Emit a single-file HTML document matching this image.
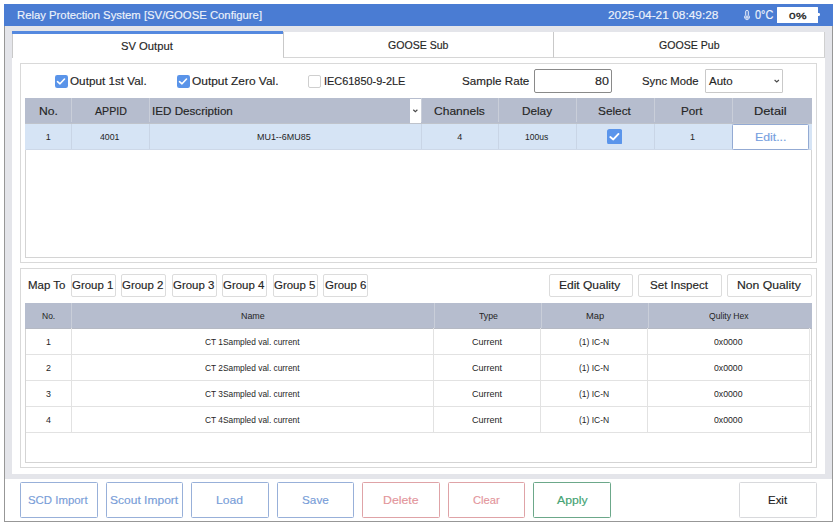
<!DOCTYPE html>
<html><head><meta charset="utf-8">
<style>
*{margin:0;padding:0;box-sizing:border-box}
html,body{width:839px;height:527px;overflow:hidden;background:#fff;font-family:"Liberation Sans",sans-serif}
.a{position:absolute}
.t{position:absolute;white-space:nowrap;transform-origin:0 0}
</style></head><body>
<div class="a" style="left:4px;top:4px;width:829px;height:518px;border:1px solid #979797;border-top:none;background:#fff"></div>
<div class="a" style="left:5px;top:26px;width:827px;height:453px;background:#e4e5ea"></div>
<div class="a" style="left:4px;top:4px;width:829px;height:22px;background:#4a7cd3"></div>
<svg class="a" style="left:743px;top:9px" width="8" height="12" viewBox="0 0 8 12"><path d="M2.45 6.19 V2.9 A1.55 1.55 0 0 1 5.55 2.9 V6.19 A2.5 2.5 0 1 1 2.45 6.19 Z" fill="#6f95d9" stroke="#dfe8f8" stroke-width="0.9"/><circle cx="4" cy="8.15" r="1.7" fill="#c3d3f1"/></svg>
<div class="a" style="left:777px;top:7px;width:41px;height:16px;background:#fff;border-radius:0.5px"></div>
<div class="a" style="left:818px;top:12.8px;width:2px;height:3.6px;background:#fff;border-radius:0 1.2px 1.2px 0"></div>
<div class="a" style="left:12px;top:31px;width:271px;height:27px;background:#fff;border-left:1px solid #c9c9c9"></div>
<div class="a" style="left:12px;top:31px;width:271px;height:3px;background:#5589df"></div>
<div class="a" style="left:283px;top:32px;width:271px;height:26px;background:#fff;border-left:1px solid #c9c9c9;border-bottom:1px solid #d6d6d6"></div>
<div class="a" style="left:553px;top:32px;width:272px;height:26px;background:#fff;border-left:1px solid #c9c9c9;border-right:1px solid #d0d0d0;border-bottom:1px solid #d6d6d6"></div>
<div class="a" style="left:12px;top:58px;width:813px;height:416px;background:#fff"></div>
<div class="a" style="left:20px;top:63px;width:797px;height:200px;border:1px solid #d9d9d9"></div>
<svg class="a" style="left:54.6px;top:74.6px" width="13" height="13" viewBox="0 0 13 13"><rect x="0" y="0" width="13" height="13" rx="2.2" fill="#5a94e9"/><path d="M2.5 6.7 L5.0 8.8 L9.5 4.0" fill="none" stroke="#fff" stroke-width="1.6" stroke-linecap="round" stroke-linejoin="round"/></svg>
<svg class="a" style="left:177.1px;top:74.6px" width="13" height="13" viewBox="0 0 13 13"><rect x="0" y="0" width="13" height="13" rx="2.2" fill="#5a94e9"/><path d="M2.5 6.7 L5.0 8.8 L9.5 4.0" fill="none" stroke="#fff" stroke-width="1.6" stroke-linecap="round" stroke-linejoin="round"/></svg>
<div class="a" style="left:308.3px;top:74.7px;width:13px;height:13px;border:1px solid #cfcfcf;border-radius:2px;background:#fff"></div>
<div class="a" style="left:534px;top:69px;width:78px;height:24px;border:1px solid #8a8a8a;border-radius:2px"></div>
<div class="a" style="left:705px;top:69px;width:78px;height:24px;border:1px solid #c9c9c9;border-radius:1px"></div>
<svg class="a" style="left:773px;top:78px" width="8" height="6" viewBox="0 0 8 6"><path d="M1.6 2.0 L3.75 4.0 L5.9 2.0" fill="none" stroke="#4a4a4a" stroke-width="1.15"/></svg>
<div class="a" style="left:25px;top:98px;width:787px;height:160px;border:1px solid #d4d4d4"></div>
<div class="a" style="left:25px;top:98px;width:787px;height:25px;background:#b6bdce"></div>
<div class="a" style="left:25px;top:123px;width:787px;height:1px;background:#bfc3cb"></div>
<div class="a" style="left:25px;top:124px;width:787px;height:26px;background:#d6e4f5"></div>
<div class="a" style="left:26px;top:149px;width:785px;height:1px;background:#cdd8e8"></div>
<div class="a" style="left:71px;top:98px;width:1px;height:24px;background:#c9ced9"></div>
<div class="a" style="left:71px;top:124px;width:1px;height:25px;background:#c9d5e6"></div>
<div class="a" style="left:149px;top:98px;width:1px;height:24px;background:#c9ced9"></div>
<div class="a" style="left:149px;top:124px;width:1px;height:25px;background:#c9d5e6"></div>
<div class="a" style="left:421px;top:98px;width:1px;height:24px;background:#c9ced9"></div>
<div class="a" style="left:421px;top:124px;width:1px;height:25px;background:#c9d5e6"></div>
<div class="a" style="left:498px;top:98px;width:1px;height:24px;background:#c9ced9"></div>
<div class="a" style="left:498px;top:124px;width:1px;height:25px;background:#c9d5e6"></div>
<div class="a" style="left:576px;top:98px;width:1px;height:24px;background:#c9ced9"></div>
<div class="a" style="left:576px;top:124px;width:1px;height:25px;background:#c9d5e6"></div>
<div class="a" style="left:654px;top:98px;width:1px;height:24px;background:#c9ced9"></div>
<div class="a" style="left:654px;top:124px;width:1px;height:25px;background:#c9d5e6"></div>
<div class="a" style="left:732px;top:98px;width:1px;height:24px;background:#c9ced9"></div>
<div class="a" style="left:732px;top:124px;width:1px;height:25px;background:#c9d5e6"></div>
<div class="a" style="left:410px;top:99px;width:11px;height:24px;background:#fff"></div>
<svg class="a" style="left:411px;top:107px" width="8" height="6" viewBox="0 0 8 6"><path d="M2.3 2.8 L4.35 4.7 L6.4 2.8" fill="none" stroke="#4a4a4a" stroke-width="1.2"/></svg>
<svg class="a" style="left:607px;top:128.8px" width="15.4" height="15.5" viewBox="0 0 15.4 15.5"><rect x="0" y="0" width="15.4" height="15.5" rx="2.6" fill="#5b95eb"/><path d="M3.3 8.0 L6.3 10.4 L11.5 4.9" fill="none" stroke="#fff" stroke-width="1.9" stroke-linecap="round" stroke-linejoin="round"/></svg>
<div class="a" style="left:732px;top:124px;width:77px;height:26px;background:#fff;border:1px solid #93aad3;border-radius:1.5px"></div>
<div class="a" style="left:20px;top:268px;width:797px;height:200px;border:1px solid #d9d9d9"></div>
<div class="a" style="left:71px;top:274px;width:45px;height:23px;border:1px solid #dcdcdc;border-radius:2px"></div>
<div class="a" style="left:121px;top:274px;width:45px;height:23px;border:1px solid #dcdcdc;border-radius:2px"></div>
<div class="a" style="left:172px;top:274px;width:45px;height:23px;border:1px solid #dcdcdc;border-radius:2px"></div>
<div class="a" style="left:222px;top:274px;width:45px;height:23px;border:1px solid #dcdcdc;border-radius:2px"></div>
<div class="a" style="left:273px;top:274px;width:45px;height:23px;border:1px solid #dcdcdc;border-radius:2px"></div>
<div class="a" style="left:323px;top:274px;width:45px;height:23px;border:1px solid #dcdcdc;border-radius:2px"></div>
<div class="a" style="left:549px;top:274px;width:84px;height:23px;border:1px solid #dcdcdc;border-radius:2px"></div>
<div class="a" style="left:638px;top:274px;width:84px;height:23px;border:1px solid #dcdcdc;border-radius:2px"></div>
<div class="a" style="left:727px;top:274px;width:85px;height:23px;border:1px solid #dcdcdc;border-radius:2px"></div>
<div class="a" style="left:25px;top:303px;width:787px;height:160px;border:1px solid #d4d4d4"></div>
<div class="a" style="left:25px;top:303px;width:787px;height:26px;background:#b6bdce"></div>
<div class="a" style="left:25px;top:328px;width:787px;height:1px;background:#b5b9c3"></div>
<div class="a" style="left:71px;top:303px;width:1px;height:25px;background:#c9ced9"></div>
<div class="a" style="left:71px;top:328px;width:1px;height:104px;background:#e2e2e2"></div>
<div class="a" style="left:434px;top:303px;width:1px;height:25px;background:#c9ced9"></div>
<div class="a" style="left:433px;top:328px;width:1px;height:104px;background:#e2e2e2"></div>
<div class="a" style="left:541px;top:303px;width:1px;height:25px;background:#c9ced9"></div>
<div class="a" style="left:540px;top:328px;width:1px;height:104px;background:#e2e2e2"></div>
<div class="a" style="left:648px;top:303px;width:1px;height:25px;background:#c9ced9"></div>
<div class="a" style="left:647px;top:328px;width:1px;height:104px;background:#e2e2e2"></div>
<div class="a" style="left:809px;top:328px;width:1px;height:104px;background:#e6e6e6"></div>
<div class="a" style="left:26px;top:354px;width:785px;height:1px;background:#e2e2e2"></div>
<div class="a" style="left:26px;top:380px;width:785px;height:1px;background:#e2e2e2"></div>
<div class="a" style="left:26px;top:406px;width:785px;height:1px;background:#e2e2e2"></div>
<div class="a" style="left:26px;top:432px;width:785px;height:1px;background:#e2e2e2"></div>
<div class="a" style="left:20px;top:482px;width:77.5px;height:36px;border:1px solid #98b0d9;border-radius:1.5px"></div>
<div class="a" style="left:105.5px;top:482px;width:77.5px;height:36px;border:1px solid #98b0d9;border-radius:1.5px"></div>
<div class="a" style="left:191px;top:482px;width:77.5px;height:36px;border:1px solid #98b0d9;border-radius:1.5px"></div>
<div class="a" style="left:276.5px;top:482px;width:77.5px;height:36px;border:1px solid #98b0d9;border-radius:1.5px"></div>
<div class="a" style="left:362.3px;top:482px;width:77.5px;height:36px;border:1px solid #dfa3a7;border-radius:1.5px"></div>
<div class="a" style="left:447.8px;top:482px;width:77.5px;height:36px;border:1px solid #dfa3a7;border-radius:1.5px"></div>
<div class="a" style="left:533.3px;top:482px;width:77.5px;height:36px;border:1px solid #6ca88a;border-radius:1.5px"></div>
<div class="a" style="left:739.3px;top:482px;width:77.4px;height:36px;border:1px solid #d8d9dc;border-radius:1.5px"></div>
<span class="t" style="left:17.23px;top:9.00px;font-size:11.701px;line-height:11.701px;color:#eef3fb;transform:scaleX(0.9673);-webkit-text-stroke:0.15px #eef3fb;">Relay Protection System [SV/GOOSE Configure]</span>
<span class="t" style="left:607.76px;top:10.00px;font-size:11.483px;line-height:11.483px;color:#eef3fb;transform:scaleX(1.0371);-webkit-text-stroke:0.15px #eef3fb;">2025-04-21 08:49:28</span>
<span class="t" style="left:755.18px;top:10.00px;font-size:11.919px;line-height:11.919px;color:#eef3fb;transform:scaleX(0.9167);-webkit-text-stroke:0.15px #eef3fb;">0°C</span>
<span class="t" style="left:788.55px;top:11.00px;font-size:9.884px;line-height:9.884px;color:#222;transform:scaleX(1.2000);-webkit-text-stroke:0.35px #222;">0</span>
<span class="t" style="left:796.20px;top:11.00px;font-size:9.884px;line-height:9.884px;color:#222;transform:scaleX(1.2000);-webkit-text-stroke:0.35px #222;">%</span>
<span class="t" style="left:121.02px;top:41.00px;font-size:11.483px;line-height:11.483px;color:#252525;transform:scaleX(0.9788);-webkit-text-stroke:0.15px #252525;">SV Output</span>
<span class="t" style="left:388.08px;top:40.00px;font-size:11.483px;line-height:11.483px;color:#252525;transform:scaleX(0.9203);-webkit-text-stroke:0.15px #252525;">GOOSE Sub</span>
<span class="t" style="left:658.78px;top:40.00px;font-size:11.483px;line-height:11.483px;color:#252525;transform:scaleX(0.9219);-webkit-text-stroke:0.15px #252525;">GOOSE Pub</span>
<span class="t" style="left:69.65px;top:76.00px;font-size:11.192px;line-height:11.192px;color:#252525;transform:scaleX(1.0479);-webkit-text-stroke:0.15px #252525;">Output 1st Val.</span>
<span class="t" style="left:191.84px;top:76.00px;font-size:11.192px;line-height:11.192px;color:#252525;transform:scaleX(1.0646);-webkit-text-stroke:0.15px #252525;">Output Zero Val.</span>
<span class="t" style="left:324.02px;top:76.00px;font-size:11.192px;line-height:11.192px;color:#252525;transform:scaleX(0.9756);-webkit-text-stroke:0.15px #252525;">IEC61850-9-2LE</span>
<span class="t" style="left:461.56px;top:76.00px;font-size:11.192px;line-height:11.192px;color:#252525;transform:scaleX(1.0413);-webkit-text-stroke:0.15px #252525;">Sample Rate</span>
<span class="t" style="left:594.71px;top:76.00px;font-size:11.483px;line-height:11.483px;color:#252525;transform:scaleX(1.0909);-webkit-text-stroke:0.15px #252525;">80</span>
<span class="t" style="left:642.09px;top:76.00px;font-size:11.192px;line-height:11.192px;color:#252525;transform:scaleX(1.0109);-webkit-text-stroke:0.15px #252525;">Sync Mode</span>
<span class="t" style="left:709.10px;top:76.00px;font-size:11.483px;line-height:11.483px;color:#252525;transform:scaleX(1.0043);-webkit-text-stroke:0.15px #252525;">Auto</span>
<span class="t" style="left:38.92px;top:106.00px;font-size:11.337px;line-height:11.337px;color:#252525;transform:scaleX(1.0750);-webkit-text-stroke:0.15px #252525;">No.</span>
<span class="t" style="left:94.50px;top:106.00px;font-size:11.337px;line-height:11.337px;color:#252525;transform:scaleX(0.9364);-webkit-text-stroke:0.15px #252525;">APPID</span>
<span class="t" style="left:151.97px;top:106.00px;font-size:11.337px;line-height:11.337px;color:#252525;transform:scaleX(1.0273);-webkit-text-stroke:0.15px #252525;">IED Description</span>
<span class="t" style="left:434.44px;top:106.00px;font-size:11.337px;line-height:11.337px;color:#252525;transform:scaleX(1.0630);-webkit-text-stroke:0.15px #252525;">Channels</span>
<span class="t" style="left:522.16px;top:106.00px;font-size:11.337px;line-height:11.337px;color:#252525;transform:scaleX(1.0357);-webkit-text-stroke:0.15px #252525;">Delay</span>
<span class="t" style="left:598.26px;top:106.00px;font-size:11.337px;line-height:11.337px;color:#252525;transform:scaleX(1.0433);-webkit-text-stroke:0.15px #252525;">Select</span>
<span class="t" style="left:681.16px;top:106.00px;font-size:11.337px;line-height:11.337px;color:#252525;transform:scaleX(1.0350);-webkit-text-stroke:0.15px #252525;">Port</span>
<span class="t" style="left:754.47px;top:106.00px;font-size:11.337px;line-height:11.337px;color:#252525;transform:scaleX(1.1296);-webkit-text-stroke:0.15px #252525;">Detail</span>
<span class="t" style="left:45.75px;top:133.00px;font-size:9.012px;line-height:9.012px;color:#252525;">1</span>
<span class="t" style="left:99.53px;top:133.00px;font-size:9.012px;line-height:9.012px;color:#252525;transform:scaleX(0.9722);">4001</span>
<span class="t" style="left:256.71px;top:133.00px;font-size:9.012px;line-height:9.012px;color:#252525;transform:scaleX(0.9925);">MU1--6MU85</span>
<span class="t" style="left:457.15px;top:133.00px;font-size:9.012px;line-height:9.012px;color:#252525;">4</span>
<span class="t" style="left:525.25px;top:133.00px;font-size:9.012px;line-height:9.012px;color:#252525;transform:scaleX(0.9478);">100us</span>
<span class="t" style="left:690.10px;top:133.00px;font-size:9.012px;line-height:9.012px;color:#252525;">1</span>
<span class="t" style="left:754.73px;top:132.00px;font-size:11.483px;line-height:11.483px;color:#76a0e0;transform:scaleX(1.0704);-webkit-text-stroke:0.15px #76a0e0;">Edit...</span>
<span class="t" style="left:27.53px;top:280.00px;font-size:10.756px;line-height:10.756px;color:#252525;transform:scaleX(1.0676);-webkit-text-stroke:0.15px #252525;">Map To</span>
<span class="t" style="left:72.34px;top:280.00px;font-size:10.756px;line-height:10.756px;color:#252525;transform:scaleX(1.0649);-webkit-text-stroke:0.15px #252525;">Group 1</span>
<span class="t" style="left:122.34px;top:280.00px;font-size:10.756px;line-height:10.756px;color:#252525;transform:scaleX(1.0649);-webkit-text-stroke:0.15px #252525;">Group 2</span>
<span class="t" style="left:172.94px;top:280.00px;font-size:10.756px;line-height:10.756px;color:#252525;transform:scaleX(1.0649);-webkit-text-stroke:0.15px #252525;">Group 3</span>
<span class="t" style="left:223.44px;top:280.00px;font-size:10.756px;line-height:10.756px;color:#252525;transform:scaleX(1.0649);-webkit-text-stroke:0.15px #252525;">Group 4</span>
<span class="t" style="left:274.34px;top:280.00px;font-size:10.756px;line-height:10.756px;color:#252525;transform:scaleX(1.0649);-webkit-text-stroke:0.15px #252525;">Group 5</span>
<span class="t" style="left:324.54px;top:280.00px;font-size:10.756px;line-height:10.756px;color:#252525;transform:scaleX(1.0649);-webkit-text-stroke:0.15px #252525;">Group 6</span>
<span class="t" style="left:559.43px;top:280.00px;font-size:11.192px;line-height:11.192px;color:#252525;transform:scaleX(1.0714);-webkit-text-stroke:0.15px #252525;">Edit Quality</span>
<span class="t" style="left:650.17px;top:280.00px;font-size:11.192px;line-height:11.192px;color:#252525;transform:scaleX(1.0345);-webkit-text-stroke:0.15px #252525;">Set Inspect</span>
<span class="t" style="left:737.11px;top:280.00px;font-size:11.192px;line-height:11.192px;color:#252525;transform:scaleX(1.0912);-webkit-text-stroke:0.15px #252525;">Non Quality</span>
<span class="t" style="left:41.67px;top:313.00px;font-size:8.285px;line-height:8.285px;color:#252525;transform:scaleX(1.0273);">No.</span>
<span class="t" style="left:240.72px;top:313.00px;font-size:8.285px;line-height:8.285px;color:#252525;transform:scaleX(1.0762);">Name</span>
<span class="t" style="left:478.60px;top:313.00px;font-size:8.285px;line-height:8.285px;color:#252525;transform:scaleX(1.0588);">Type</span>
<span class="t" style="left:585.57px;top:313.00px;font-size:8.285px;line-height:8.285px;color:#252525;transform:scaleX(1.1333);">Map</span>
<span class="t" style="left:709.26px;top:313.00px;font-size:8.285px;line-height:8.285px;color:#252525;transform:scaleX(1.0405);">Qulity Hex</span>
<span class="t" style="left:46.00px;top:338.00px;font-size:8.866px;line-height:8.866px;color:#252525;">1</span>
<span class="t" style="left:204.76px;top:338.00px;font-size:8.866px;line-height:8.866px;color:#252525;transform:scaleX(0.9424);">CT 1Sampled val. current</span>
<span class="t" style="left:471.58px;top:338.00px;font-size:8.866px;line-height:8.866px;color:#252525;transform:scaleX(1.0179);">Current</span>
<span class="t" style="left:578.54px;top:338.00px;font-size:8.866px;line-height:8.866px;color:#252525;transform:scaleX(0.9600);">(1) IC-N</span>
<span class="t" style="left:714.32px;top:338.00px;font-size:8.866px;line-height:8.866px;color:#252525;transform:scaleX(0.9821);">0x0000</span>
<span class="t" style="left:46.00px;top:364.00px;font-size:8.866px;line-height:8.866px;color:#252525;">2</span>
<span class="t" style="left:204.76px;top:364.00px;font-size:8.866px;line-height:8.866px;color:#252525;transform:scaleX(0.9424);">CT 2Sampled val. current</span>
<span class="t" style="left:471.58px;top:364.00px;font-size:8.866px;line-height:8.866px;color:#252525;transform:scaleX(1.0179);">Current</span>
<span class="t" style="left:578.54px;top:364.00px;font-size:8.866px;line-height:8.866px;color:#252525;transform:scaleX(0.9600);">(1) IC-N</span>
<span class="t" style="left:714.32px;top:364.00px;font-size:8.866px;line-height:8.866px;color:#252525;transform:scaleX(0.9821);">0x0000</span>
<span class="t" style="left:46.00px;top:390.00px;font-size:8.866px;line-height:8.866px;color:#252525;">3</span>
<span class="t" style="left:204.76px;top:390.00px;font-size:8.866px;line-height:8.866px;color:#252525;transform:scaleX(0.9424);">CT 3Sampled val. current</span>
<span class="t" style="left:471.58px;top:390.00px;font-size:8.866px;line-height:8.866px;color:#252525;transform:scaleX(1.0179);">Current</span>
<span class="t" style="left:578.54px;top:390.00px;font-size:8.866px;line-height:8.866px;color:#252525;transform:scaleX(0.9600);">(1) IC-N</span>
<span class="t" style="left:714.32px;top:390.00px;font-size:8.866px;line-height:8.866px;color:#252525;transform:scaleX(0.9821);">0x0000</span>
<span class="t" style="left:46.00px;top:416.00px;font-size:8.866px;line-height:8.866px;color:#252525;">4</span>
<span class="t" style="left:204.76px;top:416.00px;font-size:8.866px;line-height:8.866px;color:#252525;transform:scaleX(0.9424);">CT 4Sampled val. current</span>
<span class="t" style="left:471.58px;top:416.00px;font-size:8.866px;line-height:8.866px;color:#252525;transform:scaleX(1.0179);">Current</span>
<span class="t" style="left:578.54px;top:416.00px;font-size:8.866px;line-height:8.866px;color:#252525;transform:scaleX(0.9600);">(1) IC-N</span>
<span class="t" style="left:714.32px;top:416.00px;font-size:8.866px;line-height:8.866px;color:#252525;transform:scaleX(0.9821);">0x0000</span>
<span class="t" style="left:28.49px;top:495.00px;font-size:11.337px;line-height:11.337px;color:#789dd8;transform:scaleX(1.0069);-webkit-text-stroke:0.15px #789dd8;">SCD Import</span>
<span class="t" style="left:110.14px;top:495.00px;font-size:11.337px;line-height:11.337px;color:#789dd8;transform:scaleX(1.0619);-webkit-text-stroke:0.15px #789dd8;">Scout Import</span>
<span class="t" style="left:215.93px;top:495.00px;font-size:11.337px;line-height:11.337px;color:#789dd8;transform:scaleX(1.0708);-webkit-text-stroke:0.15px #789dd8;">Load</span>
<span class="t" style="left:301.86px;top:495.00px;font-size:11.337px;line-height:11.337px;color:#789dd8;transform:scaleX(1.0375);-webkit-text-stroke:0.15px #789dd8;">Save</span>
<span class="t" style="left:382.61px;top:495.00px;font-size:11.337px;line-height:11.337px;color:#e3959b;transform:scaleX(1.0871);-webkit-text-stroke:0.15px #e3959b;">Delete</span>
<span class="t" style="left:472.51px;top:495.00px;font-size:11.337px;line-height:11.337px;color:#e3959b;transform:scaleX(0.9885);-webkit-text-stroke:0.15px #e3959b;">Clear</span>
<span class="t" style="left:556.80px;top:495.00px;font-size:11.337px;line-height:11.337px;color:#44a373;transform:scaleX(1.0786);-webkit-text-stroke:0.15px #44a373;">Apply</span>
<span class="t" style="left:767.79px;top:495.00px;font-size:11.337px;line-height:11.337px;color:#222;transform:scaleX(1.0111);-webkit-text-stroke:0.15px #222;">Exit</span>
</body></html>
